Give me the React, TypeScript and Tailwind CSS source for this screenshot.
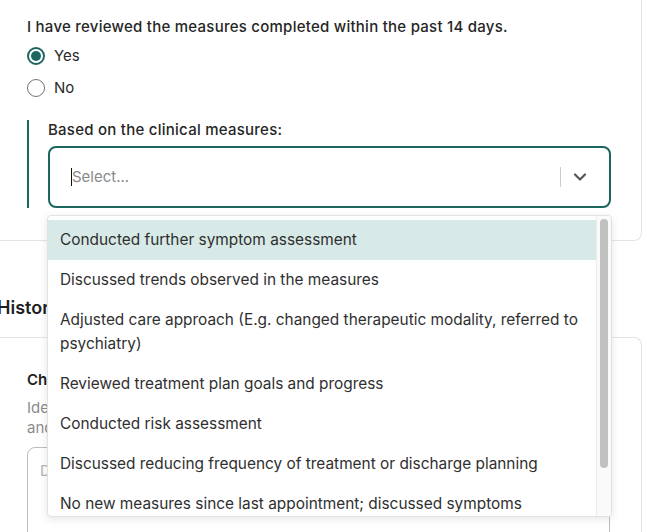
import { ChevronDown } from "lucide-react";

const options = [
  "Conducted further symptom assessment",
  "Discussed trends observed in the measures",
  "Adjusted care approach (E.g. changed therapeutic modality, referred to psychiatry)",
  "Reviewed treatment plan goals and progress",
  "Conducted risk assessment",
  "Discussed reducing frequency of treatment or discharge planning",
  "No new measures since last appointment; discussed symptoms",
  "Other",
];

const Radio = ({ label, checked }: { label: string; checked?: boolean }) => {
  return (
    <div className="h-8 flex items-center gap-[9px]">
      <div
        className={
          checked
            ? "w-[18px] h-[18px] rounded-full border-2 border-[#1d6660] flex items-center justify-center"
            : "w-[18px] h-[18px] rounded-full border border-[#767676] flex items-center justify-center"
        }
      >
        {checked && <div className="w-[10px] h-[10px] rounded-full bg-[#1d6660]" />}
      </div>
      <span className="text-[15px] text-[#2a2a2a]">{label}</span>
    </div>
  );
};

const App = () => {
  return (
    <div
      className="w-[647px] h-[532px] overflow-hidden bg-white"
      style={{ fontFamily: "Inter, 'Noto Sans', sans-serif" }}
    >
      {/* 상단 카드 */}
      <div className="w-[642px] border-r border-b border-[#e4e4e4] rounded-br-[8px] pl-[27px] pt-[17px] pb-[32px]">
        <div className="h-5 text-[15px] leading-5 font-medium tracking-[0.25px] text-[#262626]">
          I have reviewed the measures completed within the past 14 days.
        </div>
        <div className="mt-[3px] flex flex-col">
          <Radio label="Yes" checked />
          <Radio label="No" />
        </div>
        <div className="mt-4 border-l-2 border-[#1d6660] pl-[19px]">
          <div className="h-5 text-[15px] leading-5 font-medium tracking-[0.25px] text-[#262626]">
            Based on the clinical measures:
          </div>
          <div className="relative mt-[6px] w-[563px]">
            <div className="h-[62px] border-2 border-[#1d6660] rounded-[8px] flex items-center pl-[21px]">
              <div className="flex-1 flex items-center">
                <span className="w-px h-[18px] bg-[#111]" />
                <span className="text-[15px] text-[#8a8a8a]">Select...</span>
              </div>
              <span className="w-px h-5 bg-[#cccccc]" />
              <div className="pl-[9px] pr-[19px] flex items-center">
                <ChevronDown size={20} strokeWidth={2.6} color="#555" />
              </div>
            </div>

            {/* 드롭다운 메뉴 */}
            <div className="absolute z-10 left-[-1px] right-[-1px] top-[69px] h-[302px] bg-white border border-[#e2e2e2] rounded-[4px] shadow-[0_2px_8px_rgba(0,0,0,0.1)] overflow-hidden flex">
              <div className="flex-1 pt-[4px] flex flex-col">
                {options.map((o, i) => (
                  <div
                    key={o}
                    className={
                      i === 0
                        ? "px-3 py-2 text-[15.4px] leading-6 text-[#2f2f2f] bg-[#d7eae7]"
                        : "px-3 py-2 text-[15.4px] leading-6 text-[#2f2f2f]"
                    }
                  >
                    {o}
                  </div>
                ))}
              </div>
              <div className="w-[15px] bg-[#fafafa] border-l border-[#ececec] pt-[3px] pl-[3px]">
                <div className="w-[8px] h-[249px] rounded-full bg-[#c1c1c1]" />
              </div>
            </div>
          </div>
        </div>
      </div>

      <div className="mt-[55px] ml-[-3px] h-6 text-[18px] leading-6 font-semibold text-[#1f1f1f]">
        History
      </div>

      {/* 하단 카드 */}
      <div className="mt-[17px] w-[642px] border-r border-t border-[#e4e4e4] rounded-tr-[8px] pl-[27px] pt-[32px]">
        <div className="h-5 text-[15px] leading-5 font-semibold text-[#1f1f1f]">
          Challenges and concerns
        </div>
        <div className="mt-2 text-[15px] leading-5 text-[#8c8c8c]">
          Identify current challenges, symptoms
          <br />
          and concerns discussed in session.
        </div>
        <div className="mt-[9px] w-[583px] h-[120px] border border-[#bdbdbd] rounded-[8px] px-[12px] pt-[12px] text-[15px] text-[#b5b5b5]">
          Describe the client's concerns...
        </div>
      </div>
    </div>
  );
};

export default App;
